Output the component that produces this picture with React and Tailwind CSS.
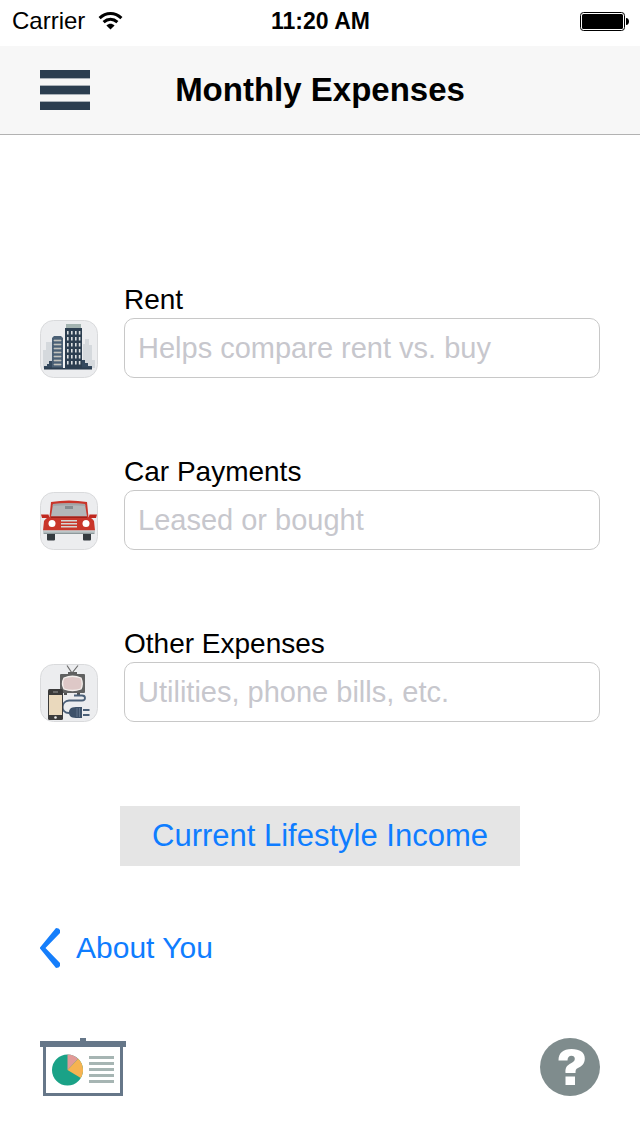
import React from "react";

function WifiIcon() {
  return (
    <svg className="h-5 w-7" viewBox="0 0 28 20" aria-hidden="true">
      <g fill="none" stroke="#000" strokeWidth="3">
        <path d="M2.6 7.2C9 1 18 1 24.4 7.2" />
        <path d="M6.6 11.2C10.8 7.4 16.2 7.4 20.4 11.2" />
      </g>
      <path d="M9.4 14.4C12 12.2 15 12.2 17.6 14.4L13.5 18.6Z" fill="#000" />
    </svg>
  );
}

function BatteryIcon() {
  return (
    <svg className="h-5 w-[49px]" viewBox="0 0 49 20" aria-hidden="true">
      <rect x="0.5" y="1.5" width="44" height="18" rx="3" fill="#fff" stroke="#000" />
      <rect x="2" y="3" width="41" height="15" rx="1.5" fill="#000" />
      <path d="M46 7C50 7 50 14 46 14Z" fill="#000" />
    </svg>
  );
}

function MenuIcon() {
  return (
    <svg className="h-10 w-[50px]" viewBox="0 0 50 40" aria-hidden="true">
      <path d="M0 8h50v1H0zM0 15h50v1H0zM0 24h50v1H0zM0 31h50v1H0z" fill="#aab1b8" />
      <path d="M0 0h50v8H0zM0 16h50v8H0zM0 32h50v8H0z" fill="#2c3e50" />
    </svg>
  );
}

function Tile({ children }) {
  return (
    <svg className="size-[58px]" viewBox="0 0 58 58" aria-hidden="true">
      <rect x="0.5" y="0.5" width="57" height="57" rx="13" fill="#ecedef" stroke="#d9dadc" />
      {children}
    </svg>
  );
}

function BuildingsIcon() {
  const rows = [11, 17, 23, 29, 35, 41];
  return (
    <Tile>
      <path d="M3 48V30h3v-8h8v26zM43 48V24h2v-5h4v6h3v15h3v8z" fill="#d5d9dd" />
      <path d="M4 48v-2h3v-2h2v-3h3v7zM42 40h3v3h3v3h4v2H42z" fill="#34495e" />
      <path d="M12 18l2-2h7l2 2v30H12z" fill="#4b6075" />
      <path d="M14 20h7v1h-7zM14 24h7v1h-7zM14 28h7v1h-7zM14 32h7v1h-7zM14 36h7v1h-7zM14 40h7v1h-7zM14 44h7v1h-7z" fill="#d3cec5" stroke="#b9bbb9" strokeWidth="0.7" />
      <rect x="26" y="4" width="15" height="5" fill="#a3b3b0" />
      <path d="M25 8h17v40H25z" fill="#2c3e50" />
      {rows.map((y) => (
        <path
          key={y}
          d={`M27 ${y}h1.6v3.4H27zM31 ${y}h1.6v3.4H31zM35 ${y}h1.6v3.4H35zM38.8 ${y}h1.6v3.4h-1.6z`}
          fill="#dce0e1"
        />
      ))}
      <rect x="4" y="47.5" width="48" height="2" fill="#2c3e50" />
      <rect x="23" y="19" width="2" height="29" fill="#f1f2f3" />
    </Tile>
  );
}

function CarIcon() {
  return (
    <Tile>
      <path d="M7 41h8v6.5q0 1-1 1H8q-1 0-1-1zM43 41h8v6.5q0 1-1 1h-6q-1 0-1-1z" fill="#343b40" />
      <path d="M1 22.5h7.500l1 3.500H2zM49.500 22.500h7.500L56 26h-7.500z" fill="#c0281f" />
      <path d="M11 10q18-3 36 0l1.500 15q4 1 5.500 4l1 9.500H3L4 29q1.500-3 5.500-4z" fill="#c9352a" />
      <path d="M13 12q16-1.500 32 0l2 12.500H11z" fill="#b3b6b8" />
      <path d="M13 12q16-1.500 32 0l.4 2q-16-1.500-32.800 0z" fill="#a1a5a7" />
      <rect x="25" y="14" width="8" height="3" fill="#858c90" />
      <path d="M11 24.500h36V26H11z" fill="#9f2119" />
      <circle cx="12" cy="31.500" r="3.500" fill="#fff" />
      <circle cx="46" cy="31.500" r="3.500" fill="#fff" />
      <path d="M21 28h16v1.500H21zM21 31h16v1.500H21zM21 34h16v1.500H21z" fill="#d5d5d5" />
      <path d="M3 38.500h52v2H3z" fill="#bdc8ca" />
      <path d="M3.500 40.500h51V42h-51z" fill="#8d999c" />
    </Tile>
  );
}

function UtilitiesIcon() {
  return (
    <Tile>
      <path d="M27 1.500L32 9L38 1.500" fill="none" stroke="#6c6c6c" strokeWidth="1.200" />
      <rect x="28" y="8" width="9" height="3" fill="#606060" />
      <rect x="20" y="10" width="25" height="19" rx="1" fill="#606161" />
      <path d="M24 29h3v2h-3zM37 29h3v2h-3z" fill="#4f5050" />
      <path d="M24 14q8.500-3.500 17 0q2.500 6 0 11q-8.500 3-17 0q-3-5.500 0-11z" fill="#dec8c7" stroke="#f4efec" strokeWidth="1.300" />
      <path d="M34 31.500H42c4 0 4 5 0 5H29C21 37 20 49 29 49" fill="none" stroke="#4b6078" strokeWidth="1.800" />
      <path d="M42 43v11h-6c-6 0-7-3-7-5.500S30 43 36 43z" fill="#3e526a" />
      <path d="M37 44v9M39.500 44v9" stroke="#60738a" />
      <path d="M43 46h6.500M43 51h6.500" stroke="#4b6078" strokeWidth="1.800" />
      <rect x="8" y="25" width="15" height="31" rx="1.500" fill="#3b3b3b" />
      <rect x="9" y="31" width="13" height="20" fill="#ead9bd" />
      <rect x="13" y="27.500" width="5" height="1" fill="#999" />
      <circle cx="15.500" cy="53.500" r="1.300" fill="#eee" />
    </Tile>
  );
}

function PresentationIcon() {
  return (
    <svg className="h-[58px] w-[86px]" viewBox="0 0 86 58" aria-hidden="true">
      <path d="M40 0h6v4h-6z" fill="#667789" />
      <path d="M4.500 7h77v49.500h-77z" fill="#fff" stroke="#667789" strokeWidth="3" />
      <path d="M0 3h86v6H0z" fill="#667789" />
      <circle cx="27.500" cy="32" r="15.500" fill="#1aa287" />
      <path d="M27.500 32V16.500A15.500 15.500 0 0 1 38.200 20.800Z" fill="#e29a97" />
      <path d="M27.500 32L38.200 20.800A15.500 15.500 0 0 1 40.800 40Z" fill="#f6b351" />
      <path d="M49 18h25v3H49zM49 24h25v3H49zM49 30h25v3H49zM49 36h25v3H49zM49 42h25v3H49z" fill="#a6b5b3" />
    </svg>
  );
}

function HelpIcon() {
  return (
    <svg className="h-[58px] w-[60px]" viewBox="0 0 60 58" aria-hidden="true">
      <ellipse cx="30" cy="29" rx="30" ry="29" fill="#7f8c8d" />
      <path d="M18.500 22.500C18.500 15 23 11 31.500 11C40 11 44.800 14.500 44.800 20.500C44.800 25.500 42 28 38 30C35.800 31.200 35.500 32 35.500 35H25.500C25 29.500 27 27.500 31 25.300C33.500 24 34.800 23 34.800 20.800C34.800 18.800 33.500 17.800 31.500 17.800C29 17.800 27.500 19.500 27.500 22.500Z" fill="#fff" />
      <path d="M25.500 38.500h9.500v8.500h-9.500z" fill="#fff" />
    </svg>
  );
}

const fields = [
  { id: "rent", label: "Rent", hint: "Helps compare rent vs. buy", Icon: BuildingsIcon },
  { id: "car", label: "Car Payments", hint: "Leased or bought", Icon: CarIcon },
  { id: "other", label: "Other Expenses", hint: "Utilities, phone bills, etc.", Icon: UtilitiesIcon },
];

export default function App() {
  return (
    <div className="min-h-screen bg-white font-['Liberation_Sans',Arial,sans-serif] text-black">
      <div className="grid h-[46px] grid-cols-3 items-center pr-[11px] pl-3 pb-1">
        <div className="flex items-center gap-3 text-2xl">
          <span>Carrier</span>
          <WifiIcon />
        </div>
        <time className="text-center text-[23px] font-bold">11:20 AM</time>
        <div className="flex justify-end">
          <BatteryIcon />
        </div>
      </div>

      <header className="grid grid-cols-[50px_1fr_50px] items-center border-b border-[#b2b2b2] bg-[#f7f7f7] px-10 py-6">
        <button type="button" aria-label="Menu">
          <MenuIcon />
        </button>
        <h1 className="text-center text-[33px] leading-10 font-bold">Monthly Expenses</h1>
      </header>

      <main className="px-10 pt-[149px]">
        <form>
          <div className="flex flex-col gap-[78px]">
            {fields.map(({ id, label, hint, Icon }) => (
              <div key={id} className="flex items-end gap-[26px]">
                <Icon />
                <div className="min-w-0 flex-1">
                  <label htmlFor={id} className="block text-[28px] leading-8">
                    {label}
                  </label>
                  <input
                    id={id}
                    type="text"
                    placeholder={hint}
                    className="mt-0.5 block h-[60px] w-full rounded-[10px] border border-[#c8c8c8] bg-white px-[13px] text-[29px] placeholder:text-[#c7c7cd]"
                  />
                </div>
              </div>
            ))}
          </div>
          <button
            type="button"
            className="mx-auto mt-[84px] flex h-[60px] w-[400px] max-w-full items-center justify-center bg-[#e5e5e5] text-[31px] leading-10 text-[#0f7dff]"
          >
            Current Lifestyle Income
          </button>
        </form>

        <a href="#about" className="mt-[62px] flex w-fit items-center gap-4 text-[30px] leading-10 text-[#0f7dff]">
          <svg className="h-10 w-5" viewBox="0 0 20 40" aria-hidden="true">
            <path d="M16 0Q19 0 20 2V5L5.500 20L20 35V38Q19 40 16 40L0 20.500V19.500Z" fill="#157efb" />
          </svg>
          About You
        </a>

        <div className="mt-[70px] flex items-center justify-between pb-10">
          <button type="button" aria-label="Presentation">
            <PresentationIcon />
          </button>
          <button type="button" aria-label="Help">
            <HelpIcon />
          </button>
        </div>
      </main>
    </div>
  );
}
